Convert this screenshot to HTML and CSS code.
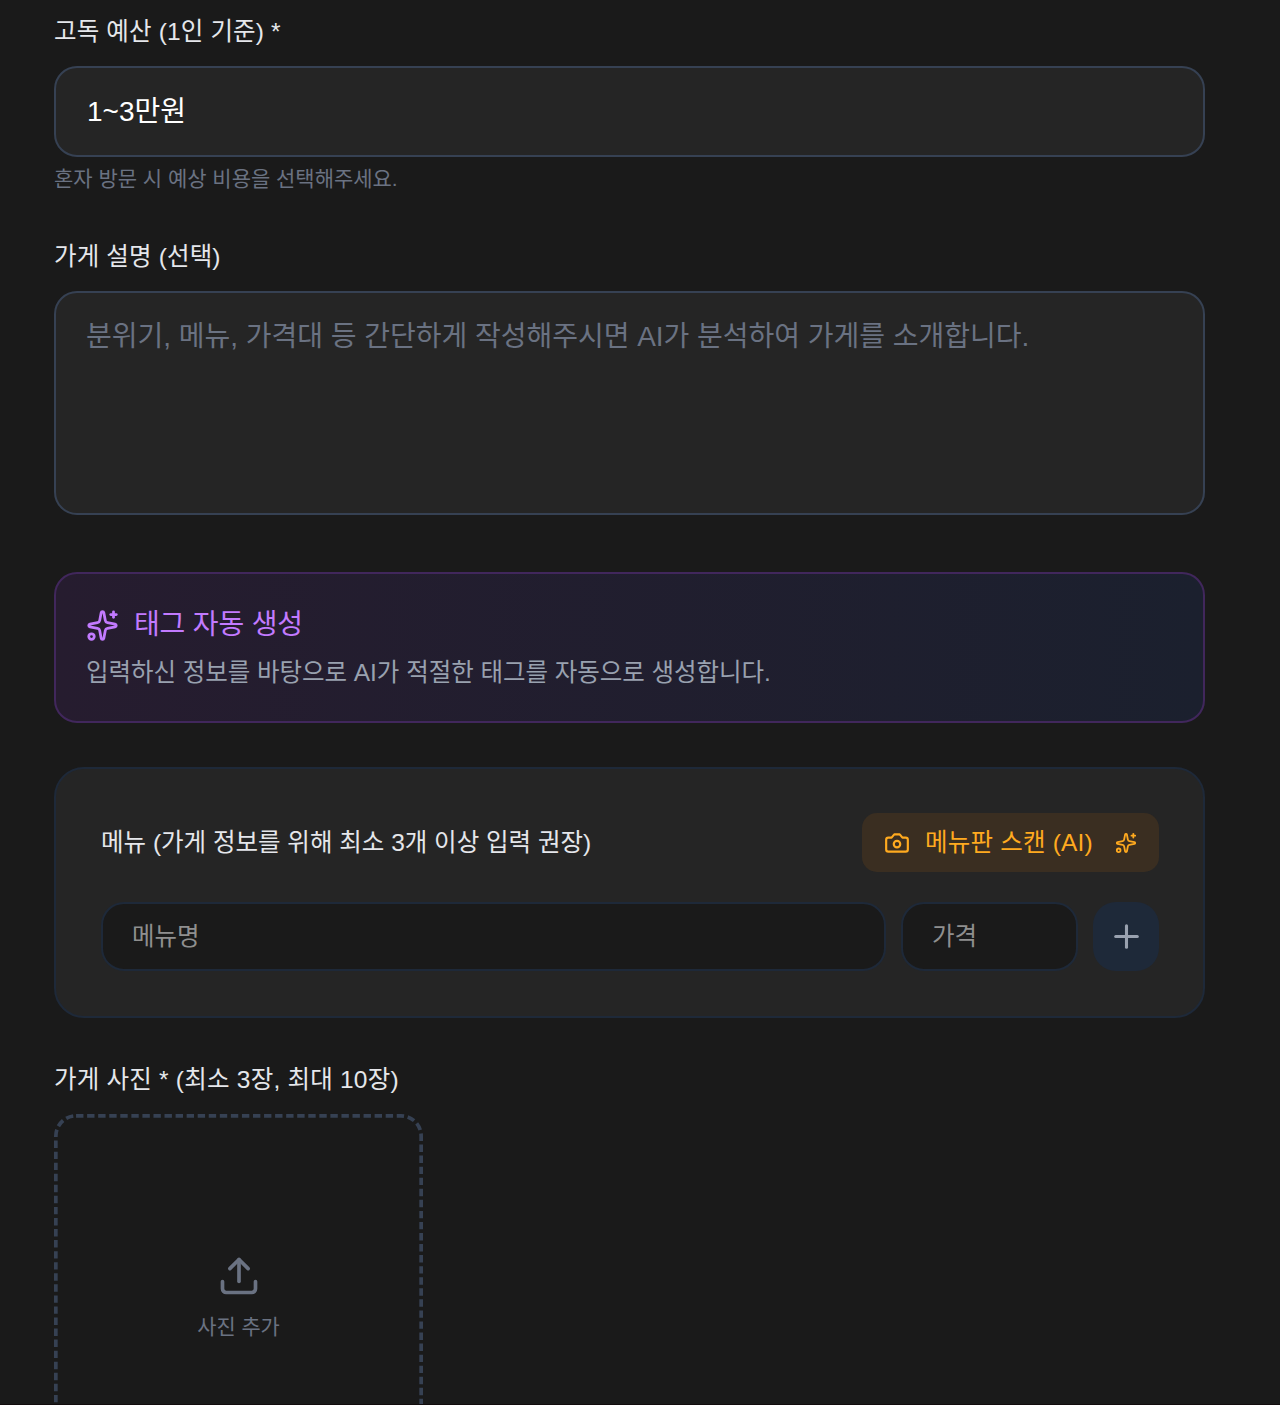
FILE: index.html
```html
<!DOCTYPE html>
<html lang="ko">
<head>
<meta charset="utf-8">
<title>가게 등록</title>
<link rel="stylesheet" href="styles.css">
</head>
<body>
<svg class="symbols" aria-hidden="true">
  <symbol id="sparkles" viewBox="0 0 24 24">
    <path d="M11.017 2.814a1 1 0 0 1 1.966 0l1.051 5.558a2 2 0 0 0 1.594 1.594l5.558 1.051a1 1 0 0 1 0 1.966l-5.558 1.051a2 2 0 0 0-1.594 1.594l-1.051 5.558a1 1 0 0 1-1.966 0l-1.051-5.558a2 2 0 0 0-1.594-1.594l-5.558-1.051a1 1 0 0 1 0-1.966l5.558-1.051a2 2 0 0 0 1.594-1.594z"/>
    <path d="M20 2v4"/><path d="M22 4h-4"/><circle cx="4" cy="20" r="2"/>
  </symbol>
</svg>
<form class="form">
  <section class="field">
    <label class="label"><span class="t-budget">고독 예산 (1인 기준) *</span></label>
    <div class="select"><span class="t-value">1~3만원</span></div>
    <p class="hint"><span class="t-hint">혼자 방문 시 예상 비용을 선택해주세요.</span></p>
  </section>

  <section class="field description">
    <label class="label"><span class="t-desc">가게 설명 (선택)</span></label>
    <div class="textarea"><span class="t-placeholder">분위기, 메뉴, 가격대 등 간단하게 작성해주시면 AI가 분석하여 가게를 소개합니다.</span></div>
  </section>

  <section class="tags">
    <h3 class="tags-title">
      <svg class="icon tags-icon"><use href="#sparkles"/></svg>
      <span class="t-tags">태그 자동 생성</span>
    </h3>
    <p class="tags-text"><span class="t-tagtext">입력하신 정보를 바탕으로 AI가 적절한 태그를 자동으로 생성합니다.</span></p>
  </section>

  <section class="menu">
    <div class="menu-head">
      <span class="menu-label"><span class="t-menu">메뉴 (가게 정보를 위해 최소 3개 이상 입력 권장)</span></span>
      <button type="button" class="scan">
        <svg class="icon scan-camera" viewBox="0 0 24 24"><path d="M14.5 4h-5L7 7H4a2 2 0 0 0-2 2v9a2 2 0 0 0 2 2h16a2 2 0 0 0 2-2V9a2 2 0 0 0-2-2h-3l-2.5-3z"/><circle cx="12" cy="13" r="3"/></svg>
        <span class="t-scan">메뉴판 스캔 (AI)</span>
        <svg class="icon scan-spark"><use href="#sparkles"/></svg>
      </button>
    </div>
    <div class="menu-row">
      <div class="input name"><span class="t-input">메뉴명</span></div>
      <div class="input price"><span class="t-input">가격</span></div>
      <button type="button" class="add" aria-label="추가">
        <svg class="icon add-icon" viewBox="0 0 24 24"><path d="M5 12h14"/><path d="M12 5v14"/></svg>
      </button>
    </div>
  </section>

  <section class="photos">
    <label class="label"><span class="t-photos">가게 사진 * (최소 3장, 최대 10장)</span></label>
    <div class="upload">
      <svg class="upload-border" viewBox="0 0 369 369"><rect x="1.85" y="1.85" width="365.3" height="365.3" rx="20.2"/></svg>
      <svg class="icon upload-icon" viewBox="0 0 24 24"><path d="M12 3v12"/><path d="m17 8-5-5-5 5"/><path d="M21 15v4a2 2 0 0 1-2 2H5a2 2 0 0 1-2-2v-4"/></svg>
      <span class="upload-text"><span class="t-upload">사진 추가</span></span>
    </div>
  </section>
</form>
</body>
</html>
```
FILE: styles.css
```css
* { box-sizing: border-box; }

html {
  height: 1405px;
  overflow: hidden;
}

body {
  margin: 0;
  height: 1405px;
  overflow: hidden;
  background: #1a1a1a;
  border-bottom: 1px solid #120c0d;
  font-family: "Liberation Sans", "Noto Sans CJK KR", sans-serif;
  color: #e5e7eb;
}

h3, p { margin: 0; font-weight: 400; }
button { border: 0; padding: 0; font: inherit; }
span { white-space: nowrap; }

.symbols { display: none; }

.icon {
  flex: none;
  fill: none;
  stroke: currentColor;
  stroke-width: 2;
  stroke-linecap: round;
  stroke-linejoin: round;
}

.form {
  width: 1151px;
  height: 1404px;
  margin-left: 54px;
  padding-top: 13px;
  overflow: hidden;
}

.label {
  display: block;
  height: 37px;
  margin-bottom: 16px;
  font-size: 24.5px;
  line-height: 37px;
}

.t-budget, .t-desc { letter-spacing: 0.15px; }
.t-hint { letter-spacing: -0.02px; }
.t-placeholder { letter-spacing: -0.02px; }
.t-tags { letter-spacing: -0.15px; }
.t-tagtext { letter-spacing: -0.04px; }
.t-scan { letter-spacing: 0.2px; }
.t-photos { letter-spacing: 0.22px; }

.select, .textarea {
  border: 2px solid #364153;
  border-radius: 23px;
  background: #252525;
  padding: 0 30px;
  font-size: 28px;
}

.select {
  height: 91px;
  padding-left: 31px;
  line-height: 88px;
  color: #fff;
}

.hint {
  height: 30px;
  margin-top: 7px;
  font-size: 21px;
  line-height: 29px;
  color: #6a7282;
}

.description { margin-top: 44px; }

.textarea {
  height: 224px;
  padding-top: 22px;
  line-height: 44px;
  color: #6a7282;
}

.tags {
  height: 151px;
  margin-top: 57px;
  padding: 29px 30px;
  border: 2px solid #41275c;
  border-radius: 23px;
  background: linear-gradient(to right, #261c2f, #1b202e);
}

.tags-title {
  display: flex;
  align-items: center;
  gap: 15px;
  height: 44px;
  font-size: 28px;
  line-height: 46px;
  color: #c27aff;
}

.tags-icon { width: 33px; height: 33px; }

.tags-text {
  margin-top: 7px;
  font-size: 24.5px;
  line-height: 37px;
  color: #99a1af;
}

.menu {
  height: 251px;
  margin-top: 44px;
  padding: 44px 44px 44px 45px;
  border: 2px solid #1e2939;
  border-radius: 30px;
  background: #252525;
}

.menu-head {
  display: flex;
  align-items: center;
  justify-content: space-between;
  height: 59px;
  font-size: 24.5px;
  line-height: 37px;
}

.scan {
  display: flex;
  align-items: center;
  width: 297px;
  height: 59px;
  padding: 0 22px;
  border-radius: 15px;
  background: #3a2e21;
  color: #ffaa1f;
}

.scan-camera { width: 26px; height: 26px; margin-right: 15px; }
.scan-spark { width: 22px; height: 22px; margin-left: auto; }

.menu-row {
  display: flex;
  gap: 15px;
  margin-top: 30px;
}

.input {
  height: 69px;
  padding: 0 29px;
  border: 2px solid #1e2939;
  border-radius: 23px;
  background: #1a1a1a;
  font-size: 24.5px;
  line-height: 65px;
  color: #8f8f8f;
}

.name { flex: 1; }
.price { width: 177px; }

.add {
  display: flex;
  align-items: center;
  justify-content: center;
  width: 66px;
  height: 69px;
  border-radius: 23px;
  background: #1e2939;
  color: #99a1af;
}

.add-icon { width: 37px; height: 37px; }

.photos { margin-top: 43px; }

.upload {
  position: relative;
  display: flex;
  flex-direction: column;
  align-items: center;
  justify-content: center;
  gap: 15px;
  width: 369px;
  height: 369px;
  color: #6a7282;
}

.upload-border {
  position: absolute;
  inset: 0;
  fill: none;
  stroke: #364153;
  stroke-width: 3.7;
  stroke-dasharray: 7.4 3.658;
}

.upload-icon { width: 44px; height: 44px; }
.upload-text { height: 30px; font-size: 20.9px; line-height: 28px; }
```
